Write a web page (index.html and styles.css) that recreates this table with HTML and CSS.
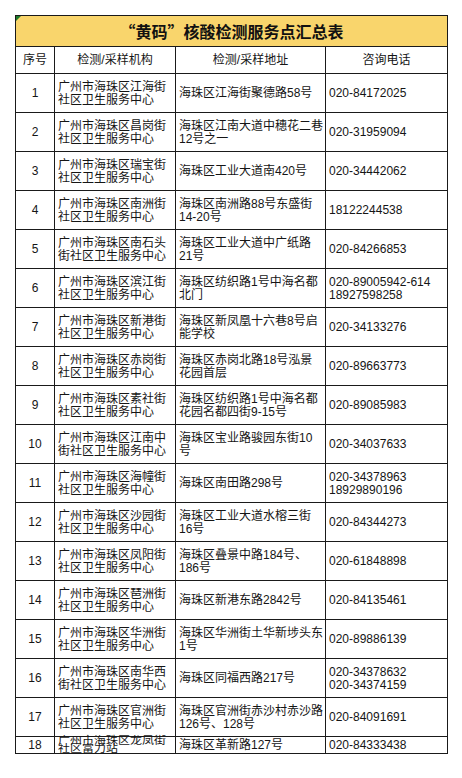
FILE: index.html
```html
<!DOCTYPE html>
<html lang="zh-CN">
<head>
<meta charset="utf-8">
<title>“黄码”核酸检测服务点汇总表</title>
<link rel="stylesheet" href="styles.css">
</head>
<body>
<div class="page">
<table class="sheet">
<colgroup>
<col class="c-no"><col class="c-org"><col class="c-addr"><col class="c-tel">
</colgroup>
<thead>
<tr class="title-row"><th colspan="4" class="title"><span class="flag"></span>“黄码”核酸检测服务点汇总表</th></tr>
<tr class="head-row"><th>序号</th><th>检测/采样机构</th><th>检测/采样地址</th><th>咨询电话</th></tr>
</thead>
<tbody>
<tr><td class="no">1</td><td>广州市海珠区江海街<br>社区卫生服务中心</td><td>海珠区江海街聚德路58号</td><td>020-84172025</td></tr>
<tr><td class="no">2</td><td>广州市海珠区昌岗街<br>社区卫生服务中心</td><td>海珠区江南大道中穗花二巷<br>12号之一</td><td>020-31959094</td></tr>
<tr><td class="no">3</td><td>广州市海珠区瑞宝街<br>社区卫生服务中心</td><td>海珠区工业大道南420号</td><td>020-34442062</td></tr>
<tr><td class="no">4</td><td>广州市海珠区南洲街<br>社区卫生服务中心</td><td>海珠区南洲路88号东盛街<br>14-20号</td><td>18122244538</td></tr>
<tr><td class="no">5</td><td>广州市海珠区南石头<br>街社区卫生服务中心</td><td>海珠区工业大道中广纸路<br>21号</td><td>020-84266853</td></tr>
<tr><td class="no">6</td><td>广州市海珠区滨江街<br>社区卫生服务中心</td><td>海珠区纺织路1号中海名都<br>北门</td><td>020-89005942-614<br>18927598258</td></tr>
<tr><td class="no">7</td><td>广州市海珠区新港街<br>社区卫生服务中心</td><td>海珠区新凤凰十六巷8号启<br>能学校</td><td>020-34133276</td></tr>
<tr><td class="no">8</td><td>广州市海珠区赤岗街<br>社区卫生服务中心</td><td>海珠区赤岗北路18号泓景<br>花园首层</td><td>020-89663773</td></tr>
<tr><td class="no">9</td><td>广州市海珠区素社街<br>社区卫生服务中心</td><td>海珠区纺织路1号中海名都<br>花园名都四街9-15号</td><td>020-89085983</td></tr>
<tr><td class="no">10</td><td>广州市海珠区江南中<br>街社区卫生服务中心</td><td>海珠区宝业路骏园东街10<br>号</td><td>020-34037633</td></tr>
<tr><td class="no">11</td><td>广州市海珠区海幢街<br>社区卫生服务中心</td><td>海珠区南田路298号</td><td>020-34378963<br>18929890196</td></tr>
<tr><td class="no">12</td><td>广州市海珠区沙园街<br>社区卫生服务中心</td><td>海珠区工业大道水榕三街<br>16号</td><td>020-84344273</td></tr>
<tr><td class="no">13</td><td>广州市海珠区凤阳街<br>社区卫生服务中心</td><td>海珠区叠景中路184号、<br>186号</td><td>020-61848898</td></tr>
<tr><td class="no">14</td><td>广州市海珠区琶洲街<br>社区卫生服务中心</td><td>海珠区新港东路2842号</td><td>020-84135461</td></tr>
<tr><td class="no">15</td><td>广州市海珠区华洲街<br>社区卫生服务中心</td><td>海珠区华洲街土华新埗头东<br>1号</td><td>020-89886139</td></tr>
<tr><td class="no">16</td><td>广州市海珠区南华西<br>街社区卫生服务中心</td><td>海珠区同福西路217号</td><td>020-34378632<br>020-34374159</td></tr>
<tr><td class="no">17</td><td>广州市海珠区官洲街<br>社区卫生服务中心</td><td>海珠区官洲街赤沙村赤沙路<br>126号、128号</td><td>020-84091691</td></tr>
<tr class="short"><td class="no">18</td><td><span class="squeeze">广州市海珠区龙凤街<br>社区富力站</span></td><td>海珠区革新路127号</td><td>020-84333438</td></tr>
</tbody>
</table>
</div>
</body>
</html>
```
FILE: styles.css
```css
html, body {
  margin: 0;
  padding: 0;
  background: #ffffff;
}
.page {
  padding: 15px 0 0 15px;
}
.sheet {
  border-collapse: collapse;
  table-layout: fixed;
  width: 432px;
  font-family: "Liberation Sans", "Noto Sans CJK SC", sans-serif;
  font-size: 12px;
  line-height: 13px;
  color: #151515;
}
.c-no { width: 39px; }
.c-org { width: 121px; }
.c-addr { width: 150px; }
.c-tel { width: 122px; }
.sheet th, .sheet td {
  border: 1px solid #1a1a1a;
  padding: 0 3px;
  white-space: nowrap;
  overflow: visible;
}
.title-row th {
  height: 30px;
}
.title {
  position: relative;
  background: #f9d56c;
  font-family: "Noto Sans CJK SC", sans-serif;
  font-size: 16px;
  font-weight: bold;
  text-align: center;
  color: #111;
  padding-left: 8px;
}
.flag {
  position: absolute;
  left: 0;
  top: 0;
  width: 0;
  height: 0;
  border-top: 5px solid #1d7a2a;
  border-right: 5px solid transparent;
}
.head-row th {
  height: 26px;
  font-weight: normal;
  text-align: center;
}
.sheet tbody tr {
  height: 39px;
}
.sheet td {
  text-align: left;
  vertical-align: middle;
  padding-top: 1px;
}
.sheet td.no {
  text-align: center;
  padding: 0;
}
.sheet tbody tr.short {
  height: 17px;
}
.short td {
  padding-top: 0;
  padding-bottom: 0;
  height: 16px;
}
.squeeze {
  display: inline-block;
  line-height: 9px;
  height: 18px;
  margin: -1px 0;
  vertical-align: middle;
  transform: scaleY(0.82);
  transform-origin: 50% 50%;
}
```
